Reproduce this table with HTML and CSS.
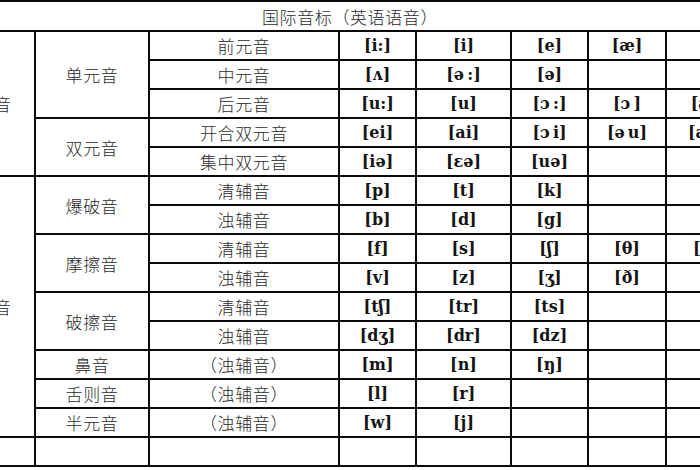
FILE: index.html
```html
<!DOCTYPE html>
<html lang="zh">
<head>
<meta charset="utf-8">
<title>国际音标（英语语音）</title>
<link rel="stylesheet" href="styles.css">
</head>
<body>
<div class="page">
<table class="ipa">
  <colgroup>
    <col class="c-cat"><col class="c-group"><col class="c-sub">
    <col class="c-a"><col class="c-b"><col class="c-a"><col class="c-d"><col class="c-e">
  </colgroup>
  <tr class="title-row"><td colspan="8" class="zh">国际音标（英语语音）</td></tr>
  <tr>
    <td rowspan="5" class="zh">元音</td>
    <td rowspan="3" class="zh">单元音</td>
    <td class="zh">前元音</td>
    <td class="p">[i:]</td><td class="p">[i]</td><td class="p">[e]</td><td class="p">[æ]</td><td class="p"></td>
  </tr>
  <tr>
    <td class="zh">中元音</td>
    <td class="p">[ʌ]</td><td class="p">[ə&#8201;:]</td><td class="p">[ə]</td><td class="p"></td><td class="p"></td>
  </tr>
  <tr>
    <td class="zh">后元音</td>
    <td class="p">[u:]</td><td class="p">[u]</td><td class="p">[ɔ&#8201;:]</td><td class="p">[ɔ&#8201;]</td><td class="p">[a:]</td>
  </tr>
  <tr>
    <td rowspan="2" class="zh">双元音</td>
    <td class="zh">开合双元音</td>
    <td class="p">[ei]</td><td class="p">[ai]</td><td class="p">[ɔ&#8201;i]</td><td class="p">[ə&#8201;u]</td><td class="p">[au]</td>
  </tr>
  <tr>
    <td class="zh">集中双元音</td>
    <td class="p">[iə]</td><td class="p">[εə]</td><td class="p">[uə]</td><td class="p"></td><td class="p"></td>
  </tr>
  <tr>
    <td rowspan="9" class="zh">辅音</td>
    <td rowspan="2" class="zh">爆破音</td>
    <td class="zh">清辅音</td>
    <td class="p">[p]</td><td class="p">[t]</td><td class="p">[k]</td><td class="p"></td><td class="p"></td>
  </tr>
  <tr>
    <td class="zh">浊辅音</td>
    <td class="p">[b]</td><td class="p">[d]</td><td class="p">[g]</td><td class="p"></td><td class="p"></td>
  </tr>
  <tr>
    <td rowspan="2" class="zh">摩擦音</td>
    <td class="zh">清辅音</td>
    <td class="p">[f]</td><td class="p">[s]</td><td class="p">[ʃ]</td><td class="p">[θ]</td><td class="p">[h]</td>
  </tr>
  <tr>
    <td class="zh">浊辅音</td>
    <td class="p">[v]</td><td class="p">[z]</td><td class="p">[ʒ]</td><td class="p">[ð]</td><td class="p"></td>
  </tr>
  <tr>
    <td rowspan="2" class="zh">破擦音</td>
    <td class="zh">清辅音</td>
    <td class="p">[tʃ]</td><td class="p">[tr]</td><td class="p">[ts]</td><td class="p"></td><td class="p"></td>
  </tr>
  <tr>
    <td class="zh">浊辅音</td>
    <td class="p">[dʒ]</td><td class="p">[dr]</td><td class="p">[dz]</td><td class="p"></td><td class="p"></td>
  </tr>
  <tr>
    <td class="zh">鼻音</td>
    <td class="zh">（浊辅音）</td>
    <td class="p">[m]</td><td class="p">[n]</td><td class="p">[ŋ]</td><td class="p"></td><td class="p"></td>
  </tr>
  <tr>
    <td class="zh">舌则音</td>
    <td class="zh">（浊辅音）</td>
    <td class="p">[l]</td><td class="p">[r]</td><td class="p"></td><td class="p"></td><td class="p"></td>
  </tr>
  <tr>
    <td class="zh">半元音</td>
    <td class="zh">（浊辅音）</td>
    <td class="p">[w]</td><td class="p">[j]</td><td class="p"></td><td class="p"></td><td class="p"></td>
  </tr>
  <tr>
    <td></td><td></td><td></td><td></td><td></td><td></td><td></td><td></td>
  </tr>
</table>
</div>
</body>
</html>
```

FILE: styles.css
```css
html, body {
  margin: 0;
  padding: 0;
  background: #ffffff;
}

.page {
  width: 700px;
  height: 470px;
  overflow: hidden;
  background: #ffffff;
}

.ipa {
  border-collapse: collapse;
  table-layout: fixed;
  width: 794px;
  margin-left: -48px;
}

.c-cat { width: 82px; }
.c-group { width: 114px; }
.c-sub { width: 190px; }
.c-a { width: 77px; }
.c-b { width: 95px; }
.c-d { width: 78px; }
.c-e { width: 81px; }

.ipa tr {
  height: 29px;
}

.ipa tr.title-row {
  height: 30px;
}

.ipa td {
  border: 2px solid #0a0a0a;
  padding: 0;
  text-align: center;
  vertical-align: middle;
  white-space: nowrap;
  overflow: hidden;
}

.zh {
  font-family: "Noto Sans CJK SC", "Noto Sans", sans-serif;
  font-size: 17px;
  font-weight: 300;
  letter-spacing: 0.6px;
  color: #2a2a2a;
  line-height: 1;
}

.p {
  font-family: "DejaVu Serif", "Liberation Serif", serif;
  font-size: 16px;
  font-weight: bold;
  color: #151515;
  line-height: 1;
}
```
